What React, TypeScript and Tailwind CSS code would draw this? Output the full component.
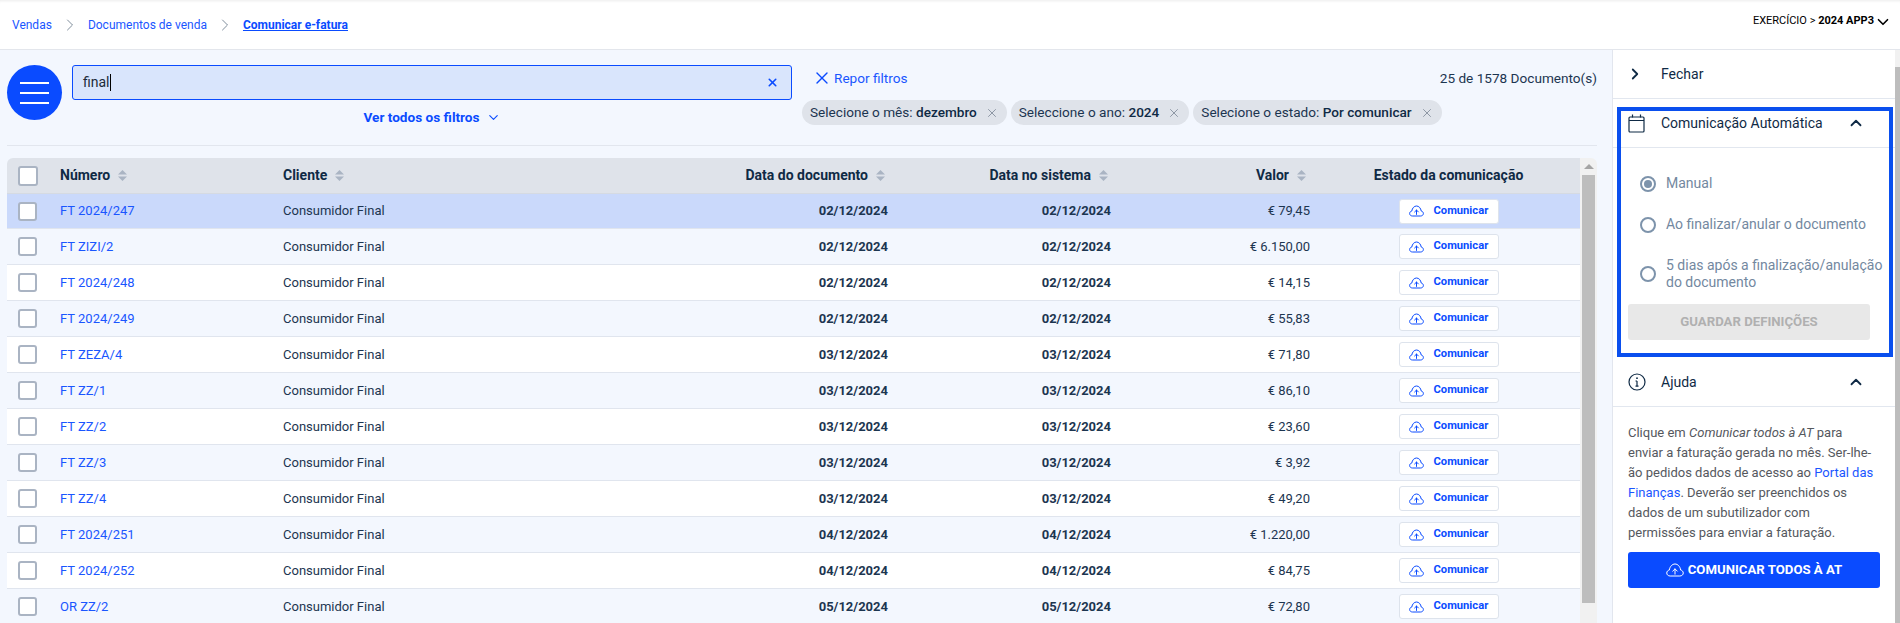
import React from "react";
import { X, ChevronRight, ChevronDown, ChevronUp } from "lucide-react";

const rows = [
  ["FT 2024/247", "02/12/2024", "€ 79,45"],
  ["FT ZIZI/2", "02/12/2024", "€ 6.150,00"],
  ["FT 2024/248", "02/12/2024", "€ 14,15"],
  ["FT 2024/249", "02/12/2024", "€ 55,83"],
  ["FT ZEZA/4", "03/12/2024", "€ 71,80"],
  ["FT ZZ/1", "03/12/2024", "€ 86,10"],
  ["FT ZZ/2", "03/12/2024", "€ 23,60"],
  ["FT ZZ/3", "03/12/2024", "€ 3,92"],
  ["FT ZZ/4", "03/12/2024", "€ 49,20"],
  ["FT 2024/251", "04/12/2024", "€ 1.220,00"],
  ["FT 2024/252", "04/12/2024", "€ 84,75"],
  ["OR ZZ/2", "05/12/2024", "€ 72,80"],
];

const GRID = "grid grid-cols-[53px_223px_300px_305px_223px_199px_270px] items-center";

function Sort() {
  return (
    <svg width="9" height="11" viewBox="0 0 9 11" className="shrink-0 ml-2 text-[#aab4c3]" fill="currentColor">
      <path d="M4.5 0 9 4.6H0z" />
      <path d="M4.5 11 0 6.4h9z" />
    </svg>
  );
}

function Cloud({ w = 15, h = 12, sw = 1 }: { w?: number; h?: number; sw?: number }) {
  return (
    <svg width={w} height={h} viewBox="0 0 24 18" fill="none" stroke="currentColor" strokeWidth={sw * 24 / w} strokeLinecap="round" strokeLinejoin="round" className="shrink-0">
      <path d="M5 17C2.800 17 1 15.200 1 13 1 11 2.500 9.400 4.400 9.100 5.200 4.400 8.200 1 12 1s6.800 3.400 7.600 8.100C21.500 9.400 23 11 23 13c0 2.200-1.800 4-4 4z" />
      <path d="M12 14.500V7.500M9 10.500l3-3 3 3" />
    </svg>
  );
}

function Check({ big }: { big?: boolean }) {
  return <span className={(big ? "w-5 h-5 ml-[11px] " : "w-[19px] h-[19px] ml-[11px] ") + "block bg-white border-2 border-[#aab4c3] rounded-[3px]"} />;
}

function Radio({ on }: { on?: boolean }) {
  return (
    <span className="w-4 h-4 rounded-full border-2 border-[#7d93ab] flex items-center justify-center shrink-0">
      {on && <span className="w-2 h-2 rounded-full bg-[#7d93ab]" />}
    </span>
  );
}

function Chip({ label, value }: { label: string; value: string }) {
  return (
    <span className="h-[25px] rounded-full bg-[#dfe3ea] pl-2 pr-[8px] flex items-center text-[13.6px] text-[#1c3550] whitespace-nowrap">
      {label}&nbsp;<b className="font-medium text-[#0f2a45]">{value}</b>
      <X size={14} strokeWidth={1.2} className="ml-[8px] text-[#6b7787]" />
    </span>
  );
}

export default function App() {
  return (
    <div className="w-[1900px] h-[623px] overflow-hidden bg-white flex flex-col font-['Roboto',sans-serif] text-[#0f2a45]">
      <header className="h-[50px] shrink-0 border-b border-[#e3e6ec] shadow-[inset_0_3px_3px_-2px_rgba(0,0,0,0.08)] flex items-center pl-3 pr-[10px] text-[12px] text-[#1a56ff]">
        <span>Vendas</span>
        <ChevronRight size={20} strokeWidth={1} className="ml-[8px] text-[#667788]" />
        <span className="ml-[8px]">Documentos de venda</span>
        <ChevronRight size={20} strokeWidth={1} className="ml-[8px] text-[#667788]" />
        <span className="ml-[8px] font-bold underline text-[#0a4bff]">Comunicar e-fatura</span>
        <span className="ml-auto text-[11px] text-black flex items-center -mt-[6px]">
          EXERCÍCIO &gt;&nbsp;<b className="font-bold">2024 APP3</b>
          <ChevronDown size={18} strokeWidth={2.2} className="-mr-[2px]" />
        </span>
      </header>

      <div className="flex flex-1 min-h-0">
        <main className="w-[1612px] shrink-0 bg-[#f3f7fe] pl-[7px] pr-[15px] flex flex-col min-h-0">
          <section className="h-[96px] shrink-0 border-b border-[#e2e6ee] pt-[15px] flex">
            <button className="w-[55px] h-[55px] rounded-full bg-[#0a4bff] flex flex-col items-center justify-center gap-2 shrink-0">
              <span className="block w-[29px] h-[2px] bg-white" />
              <span className="block w-[29px] h-[2px] bg-white" />
              <span className="block w-[29px] h-[2px] bg-white" />
            </button>
            <div className="w-[720px] ml-[10px] shrink-0 flex flex-col">
              <div className="h-[35px] border border-[#0a4bff] rounded-[3px] bg-[#d9e5fc] flex items-center pl-[10px] pr-[12px] text-[14px] text-[#1c2b3a]">
                final<span className="w-px h-[17px] bg-black" />
                <X size={13} strokeWidth={3} className="ml-auto text-[#0a4bff]" />
              </div>
              <div className="mt-[7px] flex items-center justify-center text-[13.6px] font-bold text-[#0a4bff]">
                Ver todos os filtros
                <ChevronDown size={15} strokeWidth={1.8} className="ml-[6px]" />
              </div>
            </div>
            <div className="flex-1 ml-[10px] flex flex-col">
              <div className="h-[35px] -mt-[4px] mb-[3px] flex items-center text-[13.6px]">
                <span className="flex items-center ml-[10px] text-[#1a56ff]">
                  <X size={20} strokeWidth={1.6} className="text-[#0a4bff]" />
                  <span className="ml-[2px]">Repor filtros</span>
                </span>
                <span className="ml-auto text-[#1c3550]">25 de 1578 Documento(s)</span>
              </div>
              <div className="flex gap-1 mt-[1px]">
                <Chip label="Selecione o mês:" value="dezembro" />
                <Chip label="Seleccione o ano:" value="2024" />
                <Chip label="Selecione o estado:" value="Por comunicar" />
              </div>
            </div>
          </section>

          <section className="mt-3 flex-1 min-h-0 flex rounded-t-md overflow-hidden">
            <div className="w-[1573px] shrink-0">
              <div className={GRID + " h-[36px] bg-[#dfe3ea] border-b border-[#d5dae2] text-[14px] font-bold text-[#0f2a45]"}>
                <div><Check big /></div>
                <div className="flex items-center">Número<Sort /></div>
                <div className="flex items-center">Cliente<Sort /></div>
                <div className="flex items-center justify-end pr-[3px]">Data do documento<Sort /></div>
                <div className="flex items-center justify-end pr-[3px]">Data no sistema<Sort /></div>
                <div className="flex items-center justify-end pr-[4px]">Valor<Sort /></div>
                <div className="text-center pl-[7px]">Estado da comunicação</div>
              </div>
              {rows.map((r, i) => (
                <div
                  key={i}
                  className={
                    GRID +
                    " border-b border-[#e0e5ee] text-[13px] " +
                    (i === 0 ? "h-[35px] bg-[#cad9fb]" : i % 2 === 1 ? "h-[36px] bg-[#f3f7fe]" : "h-[36px] bg-white")
                  }
                >
                  <div><Check /></div>
                  <div className="text-[#1a56ff]">{r[0]}</div>
                  <div className="text-[#1c3550]">Consumidor Final</div>
                  <div className="text-right font-bold text-[#1c3550]">{r[1]}</div>
                  <div className="text-right font-bold text-[#1c3550]">{r[1]}</div>
                  <div className="text-right text-[#1c3550]">{r[2]}</div>
                  <div className="flex justify-center pl-[7px]">
                    <button className="w-[100px] h-[25px] pl-[9px] bg-white border border-[#dde3ec] rounded-[3px] flex items-center text-[11.2px] font-bold text-[#0a4bff]">
                      <Cloud />
                      <span className="ml-[10px]">Comunicar</span>
                    </button>
                  </div>
                </div>
              ))}
            </div>
            <div className="w-[17px] shrink-0 bg-[#f1f1f1] flex flex-col items-center">
              <span className="block mt-[6px] w-0 h-0 border-x-[5px] border-x-transparent border-b-[5px] border-b-[#a5a5a5]" />
              <span className="block mt-[6px] w-[13px] h-[428px] bg-[#bdbdbd]" />
            </div>
          </section>
        </main>

        <aside className="relative w-[283px] shrink-0 border-l border-[#e2e6ee] bg-white flex flex-col">
          <div className="h-[49px] border-b border-[#e2e7ef] flex items-center pl-[14px] text-[14px]">
            <ChevronRight size={18} strokeWidth={2.4} className="-ml-[1px]" />
            <span className="ml-[17px]">Fechar</span>
          </div>
          <div className="h-[49px] border-b border-[#e2e7ef] flex items-center pl-[15px] text-[14px]">
            <svg width="18" height="19" viewBox="0 0 18 19" fill="none" stroke="currentColor" strokeWidth="1.2" className="shrink-0">
              <rect x="1" y="3" width="15" height="15" rx="1" />
              <path d="M1 6.500h15M4.500 .5v3M12.500 .5v3" />
            </svg>
            <span className="ml-[15px]">Comunicação Automática</span>
            <ChevronUp size={18} strokeWidth={2.4} className="ml-auto mr-[30px]" />
          </div>
          <div className="pl-[27px] pr-[4px] text-[14px] leading-[17px] text-[#7388a0]">
            <label className="flex items-center gap-[10px] mt-[27px]"><Radio on />Manual</label>
            <label className="flex items-center gap-[10px] mt-[24px]"><Radio />Ao finalizar/anular o documento</label>
            <label className="flex items-center gap-[10px] mt-[24px]"><Radio /><span>5 dias após a finalização/anulação<br />do documento</span></label>
          </div>
          <button className="ml-[15px] mt-[13px] w-[242px] h-[36px] rounded-[3px] bg-[#e8e8e8] text-[#b0b0b0] text-[13.2px] font-bold">GUARDAR DEFINIÇÕES</button>
          <div className="mt-[18px] h-[49px] border-b border-[#e2e7ef] flex items-center pl-[15px] text-[14px]">
            <svg width="18" height="18" viewBox="0 0 18 18" fill="none" stroke="currentColor" strokeWidth="1.2" className="shrink-0">
              <circle cx="9" cy="9" r="8" />
              <path d="M9 8v5.200M7.500 8H9M7.500 13.200h3" />
              <circle cx="9" cy="5.200" r=".9" fill="currentColor" stroke="none" />
            </svg>
            <span className="ml-[15px]">Ajuda</span>
            <ChevronUp size={18} strokeWidth={2.4} className="ml-auto mr-[30px]" />
          </div>
          <p className="ml-[15px] mt-[16px] w-[248px] text-[13px] leading-[20px] text-[#55585e]">
            Clique em <i>Comunicar todos à AT</i> para enviar a faturação gerada no mês. Ser-lhe-ão pedidos dados de acesso ao <span className="text-[#1a56ff]">Portal das Finanças</span>. Deverão ser preenchidos os dados de um subutilizador com permissões para enviar a faturação.
          </p>
          <button className="ml-[15px] mt-[9px] w-[252px] h-[36px] rounded-[3px] bg-[#0a4bff] text-white text-[13.2px] font-bold flex items-center justify-center">
            <Cloud w={18} h={14} sw={1} />
            <span className="ml-[4px]">COMUNICAR TODOS À AT</span>
          </button>
          <div className="absolute left-[4px] top-[57px] w-[276px] h-[250px] border-4 border-[#0a4fee] pointer-events-none" />
        </aside>

        <div className="w-[5px] shrink-0 bg-[#f1f1f1] pt-[17px]">
          <div className="h-full bg-[#bdbdbd]" />
        </div>
      </div>
    </div>
  );
}
